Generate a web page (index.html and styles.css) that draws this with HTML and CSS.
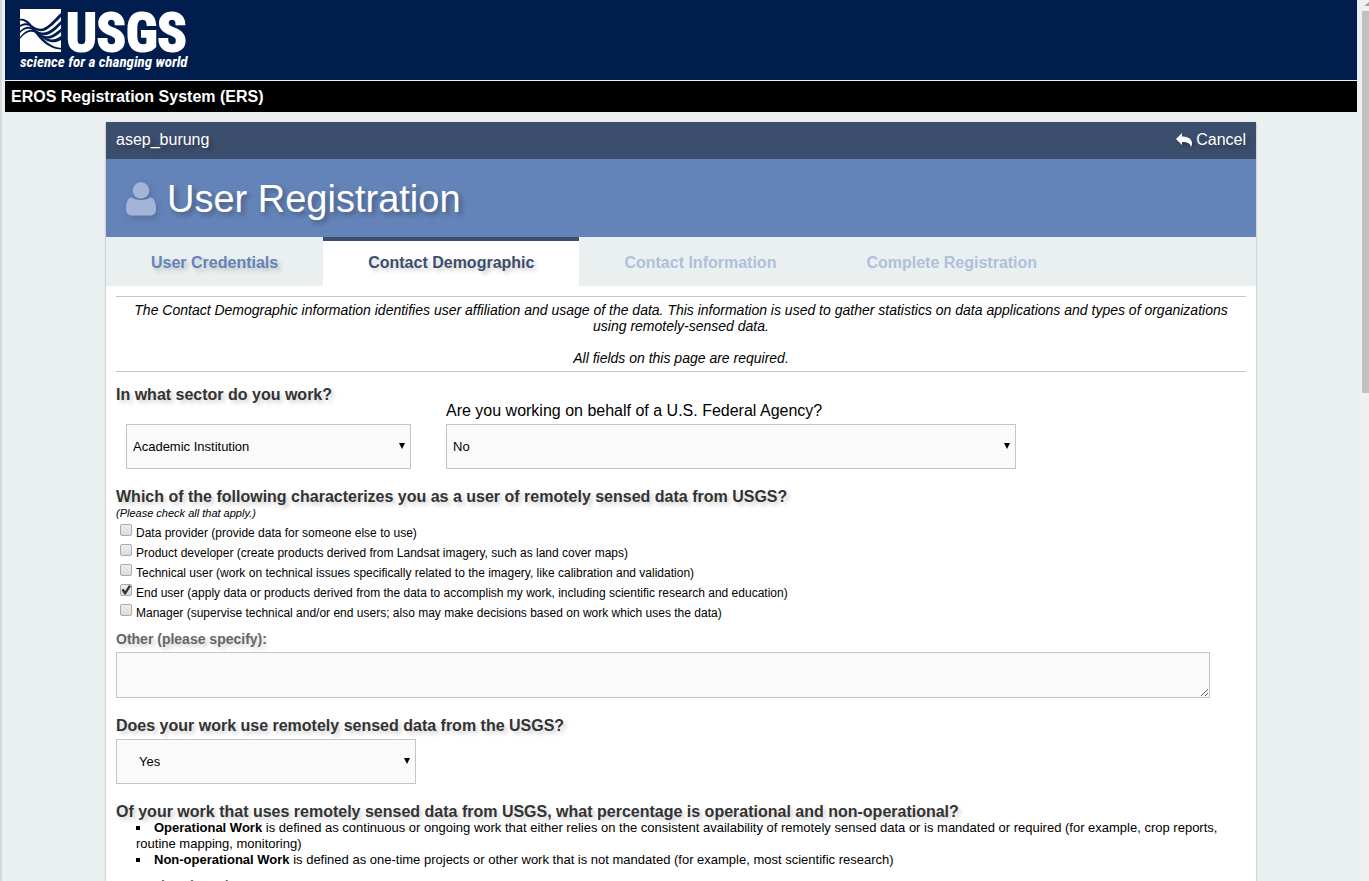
FILE: index.html
```html
<!DOCTYPE html>
<html lang="en">
<head>
<meta charset="utf-8">
<title>EROS Registration System</title>
<link rel="stylesheet" href="styles.css">
</head>
<body>
<div class="page">
  <header class="banner">
    <svg class="logo" viewBox="0 0 170 64" role="img" aria-label="USGS science for a changing world">
      <path class="logo-block" d="M0 1H41V44H0Z"/>
      <g class="logo-waves">
        <path d="M0 11C13 8 19 38 41 40V41.500C17 40 12 11 0 12.500Z"/>
        <path d="M0 17C5 14 9 15 13 18C24 26 30 15 41 5V9C30 20 23 28 13 20C9 17 5 16 0 19Z"/>
        <path d="M0 23C6 17 11 18 16 22C26 29 33 20 41 13V16.500C32 26 25 31 16 24C11 20 6 19 0 25Z"/>
        <path d="M0 29C7 20 13 20 19 25C28 32 34 26 41 20.500V24C34 30 28 34 19 27C13 22 7 22 0 31Z"/>
        <path d="M19 25C27 33 34 33 41 28V32C34 36 27 35 19 27Z"/>
      </g>
      <text class="logo-name" x="46" y="43">USGS</text>
      <text class="logo-tag" x="0" y="59">science for a changing world</text>
    </svg>
  </header>
  <div class="system-name">EROS Registration System (ERS)</div>

  <main class="card">
    <div class="user-bar">
      <span>asep_burung</span>
      <a class="cancel" href="#">
        <svg class="reply" viewBox="0 0 16 14"><path d="M6 0V3.500C12 3.500 16 6 16 10.500C16 12 15.500 13.200 14.800 14C14.800 10.500 12 9 6 9V12L0 6Z"/></svg>
        Cancel
      </a>
    </div>
    <div class="title-bar">
      <svg class="person" viewBox="0 0 30 34"><circle cx="15" cy="8.500" r="8.300"/><path d="M6 15.500C2 15.500 0 20 0 27C0 31 2 33.500 6 33.500H24C28 33.500 30 31 30 27C30 20 28 15.500 24 15.500C21 18.800 9 18.800 6 15.500Z"/></svg>
      <h1>User Registration</h1>
    </div>
    <nav class="tabs">
      <a class="tab" href="#">User Credentials</a>
      <a class="tab current" href="#">Contact Demographic</a>
      <a class="tab disabled" href="#">Contact Information</a>
      <a class="tab disabled" href="#">Complete Registration</a>
    </nav>

    <form class="content">
      <div class="intro">
        <p>The Contact Demographic information identifies user affiliation and usage of the data. This information is used to gather statistics on data applications and types of organizations using remotely-sensed data.</p>
        <p>All fields on this page are required.</p>
      </div>

      <section class="question">
        <h2><label for="sector">In what sector do you work?</label></h2>
        <div class="pair">
          <div class="select-box sector"><select id="sector"><option>Academic Institution</option></select></div>
          <div class="agency">
            <label for="agency">Are you working on behalf of a U.S. Federal Agency?</label>
            <div class="select-box"><select id="agency"><option>No</option></select></div>
          </div>
        </div>
      </section>

      <section class="question">
        <h2>Which of the following characterizes you as a user of remotely sensed data from USGS?</h2>
        <p class="hint">(Please check all that apply.)</p>
        <div class="checks">
          <label><input type="checkbox"><span>Data provider (provide data for someone else to use)</span></label>
          <label><input type="checkbox"><span>Product developer (create products derived from Landsat imagery, such as land cover maps)</span></label>
          <label><input type="checkbox"><span>Technical user (work on technical issues specifically related to the imagery, like calibration and validation)</span></label>
          <label><input type="checkbox" checked><span>End user (apply data or products derived from the data to accomplish my work, including scientific research and education)</span></label>
          <label><input type="checkbox"><span>Manager (supervise technical and/or end users; also may make decisions based on work which uses the data)</span></label>
        </div>
        <h3><label for="other">Other (please specify):</label></h3>
        <textarea id="other"></textarea>
      </section>

      <section class="question">
        <h2><label for="uses">Does your work use remotely sensed data from the USGS?</label></h2>
        <div class="select-box uses"><select id="uses"><option>Yes</option></select></div>
      </section>

      <section class="question">
        <h2>Of your work that uses remotely sensed data from USGS, what percentage is operational and non-operational?</h2>
        <ul>
          <li><b>Operational Work</b> is defined as continuous or ongoing work that either relies on the consistent availability of remotely sensed data or is mandated or required (for example, crop reports, routine mapping, monitoring)</li>
          <li><b>Non-operational Work</b> is defined as one-time projects or other work that is not mandated (for example, most scientific research)</li>
        </ul>
        <h3>Operational Work:</h3>
      </section>
    </form>
  </main>
</div>
<div class="scrollbar" aria-hidden="true"><span class="arrow"></span><span class="thumb"></span></div>
</body>
</html>
```
FILE: styles.css
```css
* { box-sizing: border-box; }

body {
  margin: 0;
  display: flex;
  height: 100vh;
  overflow: hidden;
  background: #eaf0f0;
  border-left: 2px solid #d3d9db;
  color: #000;
  font: 16px/16px "Liberation Sans", Arial, sans-serif;
}

h1, h2, h3, p, ul { margin: 0; padding: 0; }
a { text-decoration: none; }

.page {
  flex: 1;
  min-width: 0;
  padding: 0 3px;
}

.banner {
  height: 81px;
  padding: 8px 15px;
  background: #001d4d;
  border-bottom: 1px solid #eaf0f0;
}

.logo { display: block; width: 170px; height: 64px; fill: #fff; overflow: visible; }
.logo-waves { fill: #001d4d; }
.logo-name { font: bold 54px "Roboto Condensed", "Liberation Sans Narrow", "Liberation Sans", sans-serif; stroke: #fff; stroke-width: 2px; }
.logo-tag { font: italic bold 15px "Roboto Condensed", "Liberation Sans Narrow", "Liberation Sans", sans-serif; }

.system-name {
  padding: 8px 6px 7px;
  background: #000;
  color: #fff;
  font-weight: bold;
}

.card {
  max-width: 1150px;
  margin: 10px auto 0;
  background: #fff;
  box-shadow: 0 1px 2px rgba(0, 0, 0, 0.35);
}

.user-bar {
  display: flex;
  justify-content: space-between;
  padding: 10px 10px 11px;
  background: #3c4e6d;
  color: #fff;
  text-shadow: 3px 3px 4px rgba(0, 0, 0, 0.3);
}

.cancel { display: flex; align-items: center; gap: 4px; color: #fff; }
.reply { width: 16px; height: 14px; fill: #fff; filter: drop-shadow(2px 2px 2px rgba(0, 0, 0, 0.3)); }

.title-bar {
  display: flex;
  align-items: center;
  gap: 11px;
  height: 78px;
  padding: 2px 20px 0;
  background: #6483b8;
  color: #fff;
}

.title-bar h1 {
  font-size: 38px;
  line-height: 44px;
  font-weight: normal;
  text-shadow: 3px 3px 5px rgba(0, 0, 0, 0.3);
}

.person { width: 30px; height: 34px; fill: #a3b5d6; filter: drop-shadow(2px 3px 3px rgba(0, 0, 0, 0.15)); }

.tabs { display: flex; background: #eaf0f0; }

.tab {
  padding: 14px 45px 15px;
  border-top: 4px solid transparent;
  color: #6483b8;
  font-weight: bold;
  text-shadow: 3px 3px 4px rgba(0, 0, 0, 0.2);
}

.tab.current { background: #fff; border-color: #3c4e6d; color: #3c4e6d; }
.tab.disabled { color: #b0bfdc; text-shadow: none; }

.content { padding: 10px; }

.intro {
  display: grid;
  gap: 16px;
  padding: 5px 0;
  border: solid #c5c5c5;
  border-width: 1px 0;
  font-size: 14px;
  font-style: italic;
  text-align: center;
}

.question { padding-top: 15px; }
.question + .question { padding-top: 20px; }

h2, h3 { color: #333; text-shadow: 3px 3px 4px rgba(0, 0, 0, 0.2); }
h2 { font-size: 16px; line-height: 16px; }
h3 { font-size: 14px; line-height: 16px; color: #666; }

.pair { display: flex; align-items: flex-end; gap: 35px; padding-left: 10px; }
.sector { flex: 0 1 285px; }
.agency { flex: 0 1 570px; display: grid; gap: 5px; }

.select-box { position: relative; }

.select-box::after {
  content: "";
  position: absolute;
  top: 19px;
  right: 6px;
  border: solid transparent;
  border-width: 6px 3px 0;
  border-top-color: #000;
  pointer-events: none;
}

select, textarea {
  display: block;
  border: 1px solid #c5c5c5;
  border-radius: 0;
  background: #fafafa;
  color: #000;
  font: 13px "Liberation Sans", Arial, sans-serif;
}

select { appearance: none; width: 100%; height: 45px; padding: 0 6px; }
.uses { max-width: 300px; margin-top: 5px; }
.uses select { padding-left: 22px; }

.hint { font-size: 11px; font-style: italic; }
.checks { display: grid; padding: 2px 0 8px 4px; }
.checks label { display: flex; gap: 4px; font-size: 12px; line-height: 20px; }

.checks input {
  appearance: none;
  flex: none;
  width: 12px;
  height: 12px;
  margin: 1px 0 0;
  border: 1px solid #aaa;
  border-radius: 2px;
  background: linear-gradient(#eee, #dcdcdc);
}

.checks input:checked::before {
  content: "";
  display: block;
  width: 10px;
  height: 10px;
  background: #333;
  clip-path: polygon(5% 50%, 25% 38%, 42% 60%, 80% 0, 100% 12%, 48% 95%, 34% 95%);
}

textarea { width: calc(100% - 36px); height: 46px; margin-top: 5px; resize: vertical; }

ul { padding-left: 20px; list-style: square inside; font-size: 13px; line-height: 16px; }
ul + h3 { padding-top: 10px; }

.scrollbar {
  display: flex;
  flex-direction: column;
  align-items: flex-end;
  gap: 5px;
  width: 9px;
  padding-top: 2px;
  background: #f0f0f0;
}

.arrow { width: 5px; height: 4px; background: #a3a3a3; clip-path: polygon(100% 0, 100% 100%, 0 100%); }
.thumb { width: 7px; height: 382px; background: #c1c1c1; }
```
